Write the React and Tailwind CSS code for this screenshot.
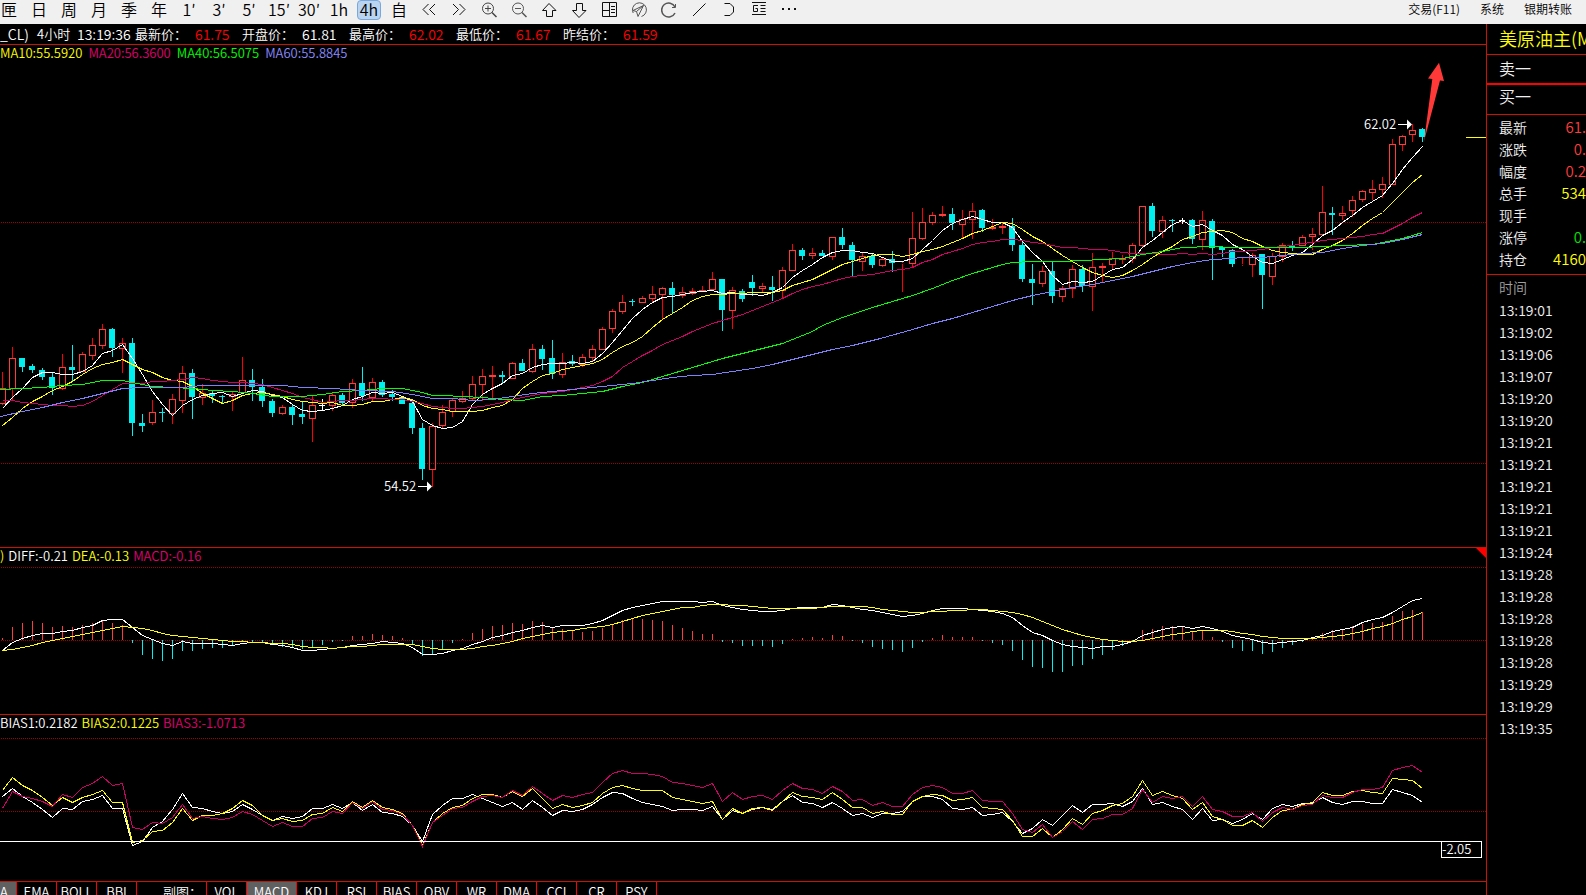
import React from "react";

const STEP = 10;

// [high, low, bodyTop, bodyBottom, kind] in chart pixels, r = rise, c = fall, w = flat
const candles = [
  [372, 405, 388, 403, "r"], [347, 400, 358, 388, "r"], [358, 372, 358, 367, "c"], [364, 373, 366, 370, "c"],
  [368, 380, 370, 377, "c"], [373, 395, 377, 388, "c"], [354, 390, 367, 388, "r"], [345, 381, 367, 370, "c"],
  [352, 372, 354, 371, "r"], [338, 360, 345, 355, "r"], [324, 349, 329, 345, "r"], [328, 357, 329, 348, "c"],
  [338, 373, 343, 348, "r"], [338, 436, 343, 423, "c"], [414, 432, 423, 426, "c"], [400, 425, 412, 422, "r"],
  [408, 422, 412, 413, "c"], [394, 424, 399, 413, "r"], [366, 413, 373, 400, "r"], [369, 419, 373, 397, "c"],
  [384, 405, 393, 397, "r"], [391, 403, 393, 396, "c"], [395, 404, 396, 397, "c"], [391, 411, 394, 396, "r"],
  [357, 394, 380, 392, "r"], [369, 401, 380, 387, "c"], [379, 407, 387, 401, "c"], [399, 417, 401, 413, "c"],
  [405, 415, 407, 413, "r"], [404, 425, 407, 415, "c"], [402, 424, 414, 417, "c"], [396, 442, 405, 418, "r"],
  [399, 411, 405, 406, "w"], [393, 411, 395, 405, "r"], [393, 405, 395, 403, "c"], [379, 408, 383, 402, "r"],
  [367, 401, 383, 396, "c"], [378, 401, 382, 397, "r"], [380, 397, 382, 395, "c"], [390, 401, 394, 397, "c"],
  [397, 404, 397, 404, "c"], [400, 434, 403, 428, "c"], [423, 480, 428, 469, "c"], [423, 487, 426, 469, "r"],
  [405, 428, 412, 425, "r"], [399, 417, 400, 411, "r"], [391, 403, 398, 401, "r"], [376, 400, 384, 398, "r"],
  [369, 401, 376, 384, "r"], [366, 399, 375, 376, "r"], [371, 383, 375, 377, "c"], [362, 379, 363, 378, "r"],
  [359, 371, 363, 371, "c"], [344, 373, 349, 371, "r"], [345, 370, 349, 359, "c"], [340, 379, 358, 374, "c"],
  [353, 378, 362, 374, "r"], [355, 366, 361, 364, "c"], [354, 367, 357, 364, "r"], [345, 361, 349, 357, "r"],
  [327, 349, 329, 349, "r"], [309, 333, 311, 328, "r"], [295, 314, 302, 311, "r"], [299, 306, 301, 302, "c"],
  [296, 302, 298, 302, "r"], [286, 302, 294, 298, "r"], [287, 319, 288, 294, "r"], [282, 313, 288, 295, "c"],
  [287, 298, 292, 295, "r"], [288, 295, 291, 293, "r"], [286, 292, 290, 291, "r"], [272, 290, 279, 289, "r"],
  [279, 331, 279, 310, "c"], [287, 329, 290, 310, "r"], [289, 302, 291, 299, "c"], [275, 296, 282, 288, "c"],
  [283, 292, 286, 288, "r"], [276, 301, 287, 290, "c"], [267, 299, 270, 290, "r"], [244, 271, 250, 270, "r"],
  [248, 260, 250, 256, "c"], [248, 259, 253, 255, "r"], [250, 256, 253, 256, "c"], [237, 260, 237, 256, "r"],
  [228, 249, 237, 245, "c"], [242, 276, 245, 260, "c"], [252, 271, 256, 261, "r"], [253, 268, 256, 265, "c"],
  [258, 267, 259, 265, "r"], [251, 272, 259, 263, "c"], [261, 292, 263, 263, "r"], [212, 267, 238, 263, "r"],
  [208, 240, 222, 238, "r"], [212, 225, 215, 222, "r"], [206, 217, 214, 215, "r"], [208, 230, 214, 223, "c"],
  [210, 239, 219, 224, "r"], [203, 239, 211, 219, "r"], [209, 232, 210, 228, "c"], [219, 230, 227, 228, "r"],
  [223, 234, 226, 227, "r"], [218, 251, 226, 245, "c"], [241, 282, 245, 279, "c"], [264, 305, 279, 283, "c"],
  [266, 287, 271, 283, "r"], [262, 303, 271, 296, "c"], [286, 302, 288, 296, "r"], [265, 298, 269, 288, "r"],
  [265, 292, 269, 286, "c"], [253, 311, 267, 286, "r"], [263, 282, 266, 267, "r"], [252, 269, 258, 264, "r"],
  [255, 264, 258, 259, "r"], [243, 263, 245, 258, "r"], [206, 248, 206, 245, "r"], [203, 237, 206, 231, "c"],
  [216, 238, 220, 231, "r"], [219, 232, 220, 221, "c"], [218, 224, 220, 221, "w"], [219, 244, 220, 239, "c"],
  [211, 250, 220, 239, "r"], [219, 280, 221, 248, "c"], [247, 257, 247, 250, "c"], [249, 267, 250, 264, "c"],
  [258, 266, 264, 264, "r"], [253, 277, 255, 264, "r"], [254, 309, 254, 275, "c"], [253, 285, 256, 276, "r"],
  [243, 262, 245, 256, "r"], [241, 251, 246, 247, "c"], [235, 246, 237, 245, "r"], [228, 250, 234, 236, "r"],
  [186, 235, 212, 234, "r"], [207, 235, 213, 215, "c"], [206, 220, 213, 215, "r"], [196, 217, 200, 210, "r"],
  [190, 202, 191, 199, "r"], [180, 200, 189, 192, "r"], [177, 198, 184, 189, "r"], [139, 185, 144, 184, "r"],
  [135, 151, 136, 144, "r"], [124, 142, 130, 134, "r"], [128, 142, 129, 137, "c"],
];

const ma5 = [
  408, 397, 388, 377, 372, 372, 374, 374, 371, 365, 353, 350, 344, 358, 374, 391, 404, 415, 405, 399, 395, 393, 392,
  396, 393, 390, 391, 395, 397, 404, 410, 411, 410, 408, 405, 399, 396, 392, 393, 392, 396, 401, 419, 425, 428, 427,
  421, 404, 394, 388, 383, 375, 373, 367, 364, 363, 363, 362, 363, 361, 353, 342, 330, 318, 309, 302, 297, 296, 294,
  292, 291, 290, 293, 292, 294, 294, 295, 292, 287, 277, 270, 264, 257, 252, 250, 250, 252, 253, 257, 261, 261, 258,
  249, 240, 230, 223, 219, 216, 219, 222, 222, 227, 241, 252, 261, 275, 284, 281, 282, 281, 275, 269, 267, 259, 247,
  240, 232, 224, 220, 226, 224, 230, 235, 244, 249, 256, 262, 263, 259, 255, 252, 244, 235, 230, 222, 215, 207, 201,
  195, 183, 169, 157, 146,
];

const ma10 = [
  425, 417, 408, 401, 396, 390, 386, 381, 374, 368, 364, 362, 359, 364, 369, 372, 377, 380, 381, 386, 393, 398, 403,
  400, 395, 393, 392, 394, 396, 399, 401, 402, 403, 402, 405, 405, 404, 401, 401, 399, 397, 399, 405, 408, 409, 411,
  411, 411, 410, 407, 405, 399, 388, 381, 375, 373, 369, 367, 365, 363, 359, 352, 346, 342, 336, 327, 319, 313, 307,
  300, 296, 294, 294, 293, 293, 292, 292, 292, 290, 285, 282, 279, 274, 269, 264, 261, 258, 255, 254, 254, 256, 254,
  251, 249, 246, 242, 238, 233, 230, 226, 222, 223, 229, 236, 241, 248, 255, 261, 267, 272, 275, 277, 275, 270, 264,
  257, 251, 246, 239, 236, 232, 231, 230, 232, 238, 241, 246, 250, 252, 253, 254, 254, 249, 245, 240, 233, 225, 218,
  212, 202, 192, 182, 174,
];

const ma20 = [
  400, 400, 402, 403, 404, 405, 405, 406, 405, 401, 395, 389, 383, 383, 383, 381, 381, 380, 379, 377, 378, 380, 381,
  382, 382, 383, 384, 387, 390, 393, 397, 399, 402, 401, 400, 400, 399, 398, 398, 399, 399, 401, 403, 406, 407, 408,
  408, 407, 406, 404, 402, 399, 397, 395, 393, 392, 391, 389, 387, 385, 381, 376, 367, 361, 355, 350, 344, 340, 336,
  331, 327, 323, 320, 317, 314, 310, 306, 302, 298, 293, 289, 286, 284, 281, 278, 276, 275, 274, 272, 270, 269, 267,
  262, 259, 254, 251, 248, 244, 242, 241, 239, 239, 240, 242, 243, 245, 247, 247, 248, 249, 249, 250, 252, 253, 253,
  253, 254, 254, 253, 254, 253, 254, 253, 251, 251, 250, 249, 247, 246, 245, 243, 242, 240, 239, 238, 237, 236, 234,
  233, 228, 223, 217, 212,
];

// slow averages change little from bar to bar, so these are kept as x,y pairs
const ma40 =
  "0,389 22,388 42,387 62,385 82,384 102,380 122,380 132,382 152,386 172,387 192,388 212,390 232,391 252,393 272,396 302,396 322,394 342,391 362,390 382,388 402,388 412,390 422,392 432,395 442,395 482,397 502,399 522,400 542,396 562,395 582,393 602,391 622,386 642,382 662,376 682,370 702,364 722,358 742,353 762,348 782,343 802,335 812,331 822,325 842,317 860,311 872,307 892,301 912,295 932,288 952,280 972,273 992,267 1002,264 1012,262 1032,261 1062,261 1082,260 1102,259 1122,258 1132,256 1142,254 1162,251 1182,247 1212,246 1232,247 1262,247 1302,247 1322,246 1342,245 1372,244 1382,242 1402,238 1422,232";
const ma60 =
  "0,416 22,411 42,407 62,402 82,398 102,393 122,388 142,387 182,387 202,385 282,385 302,387 332,388 362,390 392,391 412,394 432,398 452,398 472,400 492,399 512,396 532,393 552,391 572,389 592,387 612,385 632,383 652,380 672,377 692,375 712,374 732,371 752,368 772,364 792,359 812,354 832,349 852,345 880,338 912,329 932,323 952,318 972,312 992,306 1012,300 1032,295 1052,291 1072,287 1092,284 1112,280 1132,276 1152,271 1172,266 1192,262 1212,259 1232,258 1242,257 1262,257 1282,255 1302,253 1322,252 1342,248 1362,245 1382,243 1402,239 1422,234";

const macdBars = [
  2, 13, 17, 19, 17, 13, 14, 13, 15, 17, 20, 17, 15, -3, -15, -19, -21, -19, -11, -11, -9, -8, -8, -6, -2, -2, -3, -5,
  -7, -8, -9, -7, -5, -2, -1, 4, 4, 6, 5, 4, 2, -4, -16, -14, -10, -3, 1, 7, 11, 14, 15, 17, 16, 19, 18, 13, 11, 9, 8,
  9, 12, 16, 20, 21, 21, 20, 19, 15, 12, 9, 6, 6, -2, -3, -6, -6, -6, -7, -4, 1, 2, 3, 2, 5, 4, -1, -3, -7, -9, -10,
  -12, -8, -2, 2, 5, 3, 3, 3, -1, -3, -5, -11, -20, -27, -28, -32, -32, -26, -25, -19, -15, -10, -6, -2, 10, 11, 14,
  14, 13, 8, 9, 3, -2, -8, -11, -11, -14, -12, -8, -5, -2, 3, 7, 10, 10, 14, 16, 17, 18, 24, 29, 30, 28,
];

const diff = [
  650, 642, 638, 635, 633, 633, 631, 630, 627, 625, 620, 619, 619, 627, 635, 639, 643, 645, 641, 643, 643, 643, 644,
  645, 643, 642, 642, 644, 645, 647, 650, 650, 649, 648, 647, 645, 644, 643, 641, 642, 643, 647, 654, 654, 653, 650,
  648, 644, 641, 637, 635, 632, 630, 627, 625, 627, 625, 625, 625, 623, 620, 615, 610, 607, 605, 603, 601, 601, 601,
  601, 602, 601, 605, 607, 609, 610, 611, 611, 610, 608, 607, 607, 607, 604, 605, 607, 609, 610, 612, 614, 616, 615,
  613, 610, 608, 608, 608, 609, 610, 611, 613, 617, 625, 632, 635, 640, 644, 646, 647, 648, 646, 646, 644, 641, 635,
  632, 629, 627, 626, 628, 626, 628, 631, 635, 637, 639, 642, 643, 642, 641, 640, 637, 635, 631, 629, 627, 622, 619,
  617, 612, 606, 600, 598,
];

const dea = [
  650, 649, 647, 645, 642, 640, 638, 636, 634, 632, 630, 628, 626, 627, 628, 630, 633, 635, 636, 637, 638, 639, 640,
  641, 641, 642, 642, 643, 643, 644, 646, 647, 647, 648, 647, 646, 646, 645, 644, 644, 644, 644, 646, 648, 649, 649,
  649, 648, 646, 645, 643, 641, 638, 636, 634, 632, 631, 630, 628, 627, 626, 624, 621, 618, 615, 613, 611, 609, 607,
  607, 605, 604, 604, 605, 605, 606, 607, 608, 608, 608, 608, 608, 607, 606, 606, 606, 606, 607, 609, 610, 611, 612,
  612, 611, 611, 610, 610, 609, 609, 610, 611, 612, 614, 617, 621, 625, 629, 632, 635, 637, 639, 640, 641, 641, 640,
  638, 636, 634, 633, 631, 630, 630, 630, 631, 633, 634, 636, 637, 638, 638, 638, 638, 637, 636, 635, 633, 631, 628,
  626, 623, 619, 616, 612,
];

const bias1 = [
  796, 788, 796, 802, 809, 817, 808, 809, 801, 799, 795, 808, 808, 845, 841, 827, 821, 809, 793, 807, 808, 811, 813,
  811, 804, 809, 815, 820, 816, 818, 816, 808, 808, 804, 808, 802, 810, 804, 812, 813, 816, 825, 841, 814, 805, 798,
  798, 794, 798, 802, 806, 802, 809, 800, 807, 815, 810, 811, 809, 804, 797, 792, 793, 798, 802, 804, 806, 810, 809,
  809, 810, 806, 819, 810, 813, 809, 807, 809, 801, 795, 802, 803, 807, 802, 808, 815, 813, 817, 813, 813, 811, 801,
  796, 796, 799, 808, 809, 807, 815, 814, 812, 821, 833, 828, 819, 825, 815, 805, 812, 804, 804, 803, 806, 801, 788,
  804, 802, 806, 809, 819, 808, 820, 819, 823, 819, 813, 819, 808, 804, 806, 803, 803, 797, 802, 804, 801, 801, 803,
  803, 789, 792, 795, 802,
];

const bias2 = [
  790, 777, 785, 790, 797, 805, 797, 802, 797, 794, 790, 802, 802, 842, 840, 831, 830, 822, 808, 820, 815, 815, 813,
  808, 800, 805, 815, 820, 818, 821, 820, 814, 813, 807, 811, 801, 807, 800, 807, 809, 813, 825, 845, 822, 813, 807,
  805, 798, 794, 794, 797, 791, 796, 788, 798, 808, 804, 807, 805, 802, 793, 787, 785, 788, 790, 790, 790, 797, 799,
  801, 803, 801, 819, 808, 813, 808, 807, 810, 801, 792, 796, 797, 799, 792, 799, 807, 807, 813, 811, 814, 814, 801,
  796, 794, 795, 800, 799, 797, 807, 808, 809, 820, 836, 836, 828, 837, 829, 818, 824, 813, 810, 805, 803, 796, 780,
  795, 791, 795, 798, 809, 802, 816, 819, 825, 825, 820, 827, 817, 810, 809, 804, 802, 792, 795, 795, 791, 790, 792,
  793, 778, 779, 780, 788,
];

const bias3 = [
  808, 791, 796, 798, 801, 806, 794, 797, 787, 783, 776, 785, 783, 827, 829, 822, 823, 817, 804, 818, 816, 818, 819,
  817, 811, 814, 820, 826, 822, 826, 826, 818, 817, 811, 813, 802, 808, 801, 809, 810, 814, 825, 846, 822, 815, 808,
  807, 801, 796, 795, 797, 790, 795, 786, 793, 800, 795, 797, 794, 792, 782, 773, 770, 773, 773, 774, 776, 782, 783,
  785, 787, 783, 801, 792, 799, 796, 795, 799, 790, 783, 788, 789, 793, 786, 791, 800, 799, 805, 802, 806, 806, 794,
  787, 785, 787, 793, 793, 790, 800, 801, 801, 813, 829, 832, 824, 837, 831, 821, 829, 819, 818, 814, 814, 808, 789,
  802, 796, 798, 796, 806, 796, 809, 811, 816, 816, 812, 821, 812, 807, 809, 805, 804, 795, 797, 797, 792, 789, 789,
  787, 770, 767, 765, 772,
];

const centerOf = (i) => 2 + i * STEP;
const toPoints = (values) => values.map((y, i) => `${centerOf(i)},${y}`).join(" ");

const Line = ({ points, color }) => (
  <polyline points={points} fill="none" stroke={color} transform="translate(0.5 0.5)" shapeRendering="crispEdges" />
);

const GridLine = ({ y }) => (
  <line x1="1" x2="100%" y1={y + 0.5} y2={y + 0.5} stroke="#a00000" strokeDasharray="1 1" shapeRendering="crispEdges" />
);

const Candle = ({ x, data }) => {
  const [high, low, top, bottom, kind] = data;
  if (kind === "r") {
    return (
      <g>
        <rect x={x} y={high} width="1" height={Math.max(top - high, 0)} fill="#ff0000" />
        <rect x={x} y={bottom + 1} width="1" height={Math.max(low - bottom - 1, 0)} fill="#ff0000" />
        <rect x={x - 2.5} y={top + 0.5} width="6" height={bottom - top} fill="none" stroke="#ff3c3c" />
      </g>
    );
  }
  const color = kind === "w" ? "#ffffff" : "#00f0f0";
  return (
    <g fill={color}>
      <rect x={x} y={high} width="1" height={low - high} />
      <rect x={x - 3} y={top} width="6" height={bottom - top} />
    </g>
  );
};

const PriceTag = ({ x, y, children }) => (
  <g fill="#ffffff">
    <text x={x} y={y + 5} className="text-[13px]">
      {children}
    </text>
    <rect x={x + 34} y={y} width="11" height="1" />
    <path d={`M${x + 43} ${y - 4.5}l5 5l-5 5z`} />
  </g>
);

const PriceChart = () => (
  <svg className="block h-[486px] w-full" role="img" aria-label="K线">
    <g transform="translate(0 -61)">
      <GridLine y={222} />
      <GridLine y={463} />
      <g shapeRendering="crispEdges">
        {candles.map((c, i) => (
          <Candle key={i} x={centerOf(i)} data={c} />
        ))}
      </g>
      <Line points={toPoints(ma5)} color="#ffffff" />
      <Line points={toPoints(ma10)} color="#ffff00" />
      <Line points={toPoints(ma20)} color="#cc0066" />
      <Line points={ma40} color="#00ff00" />
      <Line points={ma60} color="#8080ff" />
      <PriceTag x={384} y={486}>54.52</PriceTag>
      <PriceTag x={1364} y={124}>62.02</PriceTag>
      <rect x="1466" y="137" width="20" height="1" fill="#ffff00" />
      <path d="M1439 62.7L1428 78.5L1432.3 79L1424 141.5L1440 80.5L1444 81Z" fill="#ff3838" />
    </g>
  </svg>
);

const MacdChart = () => (
  <svg className="block h-[150px] w-full" role="img" aria-label="MACD">
    <g transform="translate(0 -564)">
      <GridLine y={567} />
      <GridLine y={640} />
      <g shapeRendering="crispEdges">
        {macdBars.map((v, i) => (
          <rect
            key={i}
            x={centerOf(i)}
            y={v > 0 ? 640 - v : 640}
            width="1"
            height={Math.abs(v)}
            fill={v > 0 ? "#ff3c3c" : "#00f0f0"}
          />
        ))}
      </g>
      <Line points={toPoints(diff)} color="#ffffff" />
      <Line points={toPoints(dea)} color="#ffff00" />
    </g>
  </svg>
);

const BiasChart = () => (
  <svg className="block h-[150px] w-full" role="img" aria-label="BIAS">
    <g transform="translate(0 -731)">
      <GridLine y={738} />
      <GridLine y={811} />
      <Line points={toPoints(bias1)} color="#ffffff" />
      <Line points={toPoints(bias2)} color="#ffff00" />
      <Line points={toPoints(bias3)} color="#cc0066" />
      <rect x="0" y="841" width="1482" height="1" fill="#ffffff" />
      <rect x="1441.5" y="841.5" width="40" height="16" fill="#000000" stroke="#ffffff" />
      <text x="1442" y="854" fill="#ffffff" className="text-[13px]">
        -2.05
      </text>
    </g>
  </svg>
);

const Legend = ({ items, className }) => (
  <div className={"flex h-4 text-[13px] leading-4 whitespace-nowrap " + className}>
    {items.map(([text, color]) => (
      <span key={text} className={color}>
        {text}
      </span>
    ))}
  </div>
);

const Icon = ({ children }) => (
  <svg width="16" height="16" viewBox="0 0 16 16" fill="none" stroke="#111111" aria-hidden="true">
    {children}
  </svg>
);

const tools = [
  { name: "匣" },
  { name: "日" },
  { name: "周" },
  { name: "月" },
  { name: "季" },
  { name: "年" },
  { name: "1′" },
  { name: "3′" },
  { name: "5′" },
  { name: "15′" },
  { name: "30′" },
  { name: "1h" },
  { name: "4h", active: true },
  { name: "自" },
  { name: "前移", icon: <path d="M7.5 2L2 7.5L7.5 13M14 2L8.5 7.5L14 13" /> },
  { name: "后移", icon: <path d="M2 2L7.5 7.5L2 13M8.5 2L14 7.5L8.5 13" /> },
  {
    name: "放大",
    icon: (
      <g stroke="#444444">
        <circle cx="7" cy="6.5" r="5.5" />
        <path d="M4 6.5h6M7 3.5v6" />
        <path d="M11 10.5L15.5 15" strokeWidth="1.5" />
      </g>
    ),
  },
  {
    name: "缩小",
    icon: (
      <g stroke="#555555">
        <circle cx="7" cy="6.5" r="5.5" />
        <path d="M4 6.5h6" />
        <path d="M11 10.5L15.5 15" strokeWidth="1.5" />
      </g>
    ),
  },
  { name: "上移", icon: <path d="M8 1.5L1.5 8.5H5.5V14.5H11.5V8.5H15Z" /> },
  { name: "下移", icon: <path d="M8 15.5L1.5 8.5H5.5V1.5H11.5V8.5H15Z" /> },
  { name: "布局", icon: <path d="M1.5 .5h14v14h-14zM8.5 .5v14M1.5 8.5h7M10 4.5h4M10 7.5h4M10 10.5h4" /> },
  {
    name: "导航",
    icon: (
      <g stroke="#555555">
        <path d="M2.2 11A7 7 0 1 1 10.5 14.5" />
        <path d="M12.5 3.5L2 8.5L5.5 9.5L7 14.5Z" />
        <path d="M12.5 3.5L5.5 9.5" />
      </g>
    ),
  },
  {
    name: "刷新",
    icon: (
      <g stroke="#555555">
        <path d="M14 5A7 7 0 1 0 14 11" strokeWidth="1.5" />
        <path d="M14.5 2V5.5H11" />
      </g>
    ),
  },
  { name: "画线", icon: <path d="M2 14L14.5 1.5" /> },
  { name: "弧线", icon: <path d="M3.5 1.5H9L12.5 5V10L9 13.5H3.5" /> },
  {
    name: "公式",
    icon: (
      <g>
        <path d="M1 .5h14M1 12.5h14M9.5 3.5h5M9.5 6.5h5M9.5 9.5h5" />
        <path d="M7 3.5H2.5V9.5H6.5V6.5H4.5" />
      </g>
    ),
  },
  {
    name: "更多",
    icon: (
      <g fill="#111111" stroke="none">
        <rect x="1" y="6" width="2" height="2" />
        <rect x="7" y="6" width="2" height="2" />
        <rect x="13" y="6" width="2" height="2" />
      </g>
    ),
  },
];

const toolStyle = ({ icon, active }) => {
  if (icon) return "py-0.5";
  if (active) {
    return "flex h-5 w-6 justify-center rounded-sm border border-[#7aa7dd] bg-[#b8d4f0] text-base leading-4";
  }
  return "text-base leading-[18px] whitespace-nowrap";
};

const Toolbar = () => (
  <header className="flex h-6 shrink-0 items-start justify-between bg-[#f0f0f0] text-black">
    <div className="-ml-1.5 flex">
      {tools.map((tool) => (
        <button key={tool.name} aria-label={tool.name} className="flex h-5 w-[30px] shrink-0 items-start justify-center">
          <span className={toolStyle(tool)}>{tool.icon ? <Icon>{tool.icon}</Icon> : tool.name}</span>
        </button>
      ))}
    </div>
    <nav className="flex gap-5 pr-3.5 text-xs leading-[18px] whitespace-nowrap">
      <a href="#trade">交易(F11)</a>
      <a href="#system">系统</a>
      <a href="#transfer">银期转账</a>
    </nav>
  </header>
);

const quotes = [
  ["最新价：", "61.75", "text-[#ff0000]"],
  ["开盘价：", "61.81", "text-white"],
  ["最高价：", "62.02", "text-[#ff0000]"],
  ["最低价：", "61.67", "text-[#ff0000]"],
  ["昨结价：", "61.59", "text-[#ff0000]"],
];

const QuoteBar = () => (
  <div className="flex h-5 shrink-0 items-center text-sm leading-5 whitespace-nowrap">
    <span className="w-[37px]">_CL)</span>
    <span className="w-10 text-[13px]">4小时</span>
    <span className="w-[58px]">13:19:36</span>
    {quotes.map(([label, value, color]) => (
      <span key={label} className="flex w-[107px]">
        <span className="w-[60px] text-[13px]">{label}</span>
        <span className={color}>{value}</span>
      </span>
    ))}
  </div>
);

const stats = [
  ["最新", "61.", "text-[#ff3c3c]"],
  ["涨跌", "0.", "text-[#ff3c3c]"],
  ["幅度", "0.2", "text-[#ff3c3c]"],
  ["总手", "534", "text-[#ffff00]"],
  ["现手", "", "text-white"],
  ["涨停", "0.", "text-[#00e600]"],
  ["持仓", "4160", "text-[#ffff00]"],
];

const ticks = [
  "13:19:01", "13:19:02", "13:19:06", "13:19:07", "13:19:20", "13:19:20", "13:19:21", "13:19:21", "13:19:21",
  "13:19:21", "13:19:21", "13:19:24", "13:19:28", "13:19:28", "13:19:28", "13:19:28", "13:19:28", "13:19:29",
  "13:19:29", "13:19:35",
];

const SidePanel = () => (
  <aside className="w-[100px] shrink-0 overflow-hidden border-l border-[#c81400] text-[#f0f0f0]">
    <h1 className="h-[30px] pl-3 text-lg leading-7 font-[350] whitespace-nowrap text-[#ffff00]">美原油主(M</h1>
    <p className="h-[29px] border-t border-[#c81400] pl-3 text-base leading-[26px]">卖一</p>
    <p className="h-[31px] border-t-2 border-[#ff0000] pl-3 text-base leading-[22px]">买一</p>
    <div className="border-t border-[#c81400] pt-px pb-1">
      <table className="w-full text-sm">
        <tbody>
          {stats.map(([label, value, color]) => (
            <tr key={label} className="h-[22px]">
              <th scope="row" className="p-0 pl-3 text-left leading-[22px] font-[350]">
                {label}
              </th>
              <td className={"p-0 text-right text-[15px] leading-[22px] " + color}>{value}</td>
            </tr>
          ))}
        </tbody>
      </table>
    </div>
    <table className="w-full border-t border-[#c81400] text-sm">
      <thead>
        <tr>
          <th scope="col" className="h-6 p-0 pl-3 text-left leading-6 font-[350] text-[#a0a0a0]">
            时间
          </th>
        </tr>
      </thead>
      <tbody>
        {ticks.map((time, i) => (
          <tr key={i}>
            <td className="h-[22px] p-0 pl-3 leading-[22px]">{time}</td>
          </tr>
        ))}
      </tbody>
    </table>
  </aside>
);

const IndicatorTab = ({ name, active, wide }) => (
  <button
    className={
      "flex h-6 shrink-0 justify-center border-r border-[#ff0000] text-[13px] leading-5 " +
      (wide ? "w-[50px] " : "w-10 ") +
      (active ? "bg-[#606060]" : "")
    }
  >
    {name}
  </button>
);

const IndicatorTabs = () => (
  <nav className="flex h-6 shrink-0 border-t border-[#c81400]">
    <button className="flex h-6 w-[17px] shrink-0 border-r border-[#ff0000] bg-[#606060] text-[13px] leading-5">
      A
    </button>
    <IndicatorTab name="EMA" />
    <IndicatorTab name="BOLL" />
    <IndicatorTab name="BBI" />
    <span className="h-6 w-[70px] border-r border-[#ff0000] pl-[26px] text-[13px] leading-5">副图：</span>
    <IndicatorTab name="VOL" />
    <IndicatorTab name="MACD" active wide />
    {["KDJ", "RSI", "BIAS", "OBV", "WR", "DMA", "CCI", "CR", "PSY"].map((name) => (
      <IndicatorTab key={name} name={name} />
    ))}
  </nav>
);

export default function App() {
  return (
    <div className="flex h-screen flex-col overflow-hidden bg-black font-['Noto_Sans_CJK_SC',sans-serif] font-[350] text-white">
      <Toolbar />
      <div className="flex min-h-0 flex-1">
        <main className="flex min-w-0 flex-1 flex-col overflow-hidden">
          <QuoteBar />
          <section className="border-t border-[#c81400]">
            <Legend
              className="gap-1.5"
              items={[
                ["MA10:55.5920", "text-[#ffff00]"],
                ["MA20:56.3600", "text-[#e00070]"],
                ["MA40:56.5075", "text-[#00ff00]"],
                ["MA60:55.8845", "text-[#8c8cff]"],
              ]}
            />
            <PriceChart />
          </section>
          <section className="relative border-t border-[#c81400]">
            <svg className="absolute top-0 right-0" width="10" height="10" aria-hidden="true">
              <path d="M0 0H10V10Z" fill="#ff0000" />
            </svg>
            <Legend
              className="gap-1"
              items={[
                [")", "text-[#ffff00]"],
                ["DIFF:-0.21", "text-white"],
                ["DEA:-0.13", "text-[#ffff00]"],
                ["MACD:-0.16", "text-[#e00070]"],
              ]}
            />
            <MacdChart />
          </section>
          <section className="border-t border-[#c81400]">
            <Legend
              className="gap-1"
              items={[
                ["BIAS1:0.2182", "text-white"],
                ["BIAS2:0.1225", "text-[#ffff00]"],
                ["BIAS3:-1.0713", "text-[#e00070]"],
              ]}
            />
            <BiasChart />
          </section>
          <IndicatorTabs />
        </main>
        <SidePanel />
      </div>
    </div>
  );
}
